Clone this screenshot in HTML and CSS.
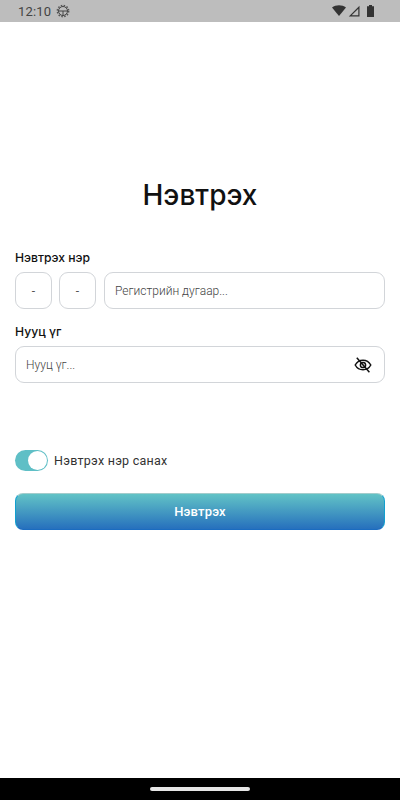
FILE: index.html
```html
<!DOCTYPE html>
<html lang="mn">
<head>
  <meta charset="UTF-8">
  <title>Нэвтрэх</title>
  <link rel="stylesheet" href="styles.css">
</head>
<body>
  <div class="status-bar">
    <div class="status-left">
      <span class="clock">12:10</span>
      <svg class="gear" width="14" height="14" viewBox="0 0 14 14">
        <circle cx="7" cy="7" r="5.600" fill="none" stroke="#555" stroke-width="1.600" stroke-dasharray="1.500 1.432"/>
        <circle cx="7" cy="7" r="4.500" fill="#bdbdbd" stroke="#444" stroke-width="1"/>
        <path d="M2.500 7h9M7 7v4.500" stroke="#444" stroke-width="1"/>
      </svg>
    </div>
    <div class="status-right">
      <svg width="14" height="12" viewBox="0 0 14 12"><path d="M0 2.600C3.800-.6 10.200-.6 14 2.600L7 11z" fill="#333"/></svg>
      <svg width="12" height="12" viewBox="0 0 12 12"><path d="M11.500.8V11.500H.8zM10.300 3.700L3.700 10.300h6.600z" fill="#333" fill-rule="evenodd"/></svg>
      <svg class="battery" width="7" height="12" viewBox="0 0 7 12"><path d="M2 0h3v1.200h2V12H0V1.200h2z" fill="#333"/></svg>
    </div>
  </div>

  <main class="login">
    <h1 class="title">Нэвтрэх</h1>

    <label class="field-label">Нэвтрэх нэр</label>
    <div class="reg-row">
      <div class="box box-small">-</div>
      <div class="box box-small">-</div>
      <div class="box box-grow placeholder">Регистрийн дугаар...</div>
    </div>

    <label class="field-label label-second">Нууц үг</label>
    <div class="box box-password">
      <span class="placeholder">Нууц үг...</span>
      <svg class="eye" width="18" height="18" viewBox="0 0 18 18" fill="none" stroke="#111" stroke-width="1.500">
        <path d="M1.200 9C3 5.800 5.800 4.200 9 4.200s6 1.600 7.800 4.800C15 12.200 12.200 13.800 9 13.800S3 12.200 1.200 9z"/>
        <circle cx="9" cy="9" r="2.600"/>
        <path d="M2.800 1.800l12.600 14.400"/>
      </svg>
    </div>

    <div class="remember">
      <div class="toggle"><div class="knob"></div></div>
      <span>Нэвтрэх нэр санах</span>
    </div>

    <button class="login-button">Нэвтрэх</button>
  </main>

  <div class="nav-bar"><div class="nav-handle"></div></div>
</body>
</html>
```

FILE: styles.css
```css
* {
  box-sizing: border-box;
}
html, body {
  height: 100%;
}
body {
  margin: 0;
  display: flex;
  flex-direction: column;
  height: 800px;
  font-family: Roboto, "Noto Sans", sans-serif;
  background-color: #fff;
  color: #111;
  overflow: hidden;
}
.status-bar {
  height: 22px;
  flex-shrink: 0;
  background-color: #bdbdbd;
  display: flex;
  justify-content: space-between;
  align-items: center;
  padding: 0 26px 0 18px;
}
.status-left {
  display: flex;
  align-items: center;
  gap: 5px;
}
.clock {
  font-size: 13px;
  letter-spacing: 0.2px;
  color: #444;
}
.status-right {
  display: flex;
  align-items: center;
  gap: 2px;
}
.battery {
  margin-left: 5px;
}
.login {
  flex: 1;
  padding: 0 15px;
  display: flex;
  flex-direction: column;
}
.title {
  margin: 155px 0 0;
  height: 36px;
  line-height: 36px;
  font-family: Inter, sans-serif;
  font-size: 28px;
  font-weight: 500;
  text-align: center;
}
.field-label {
  display: block;
  font-family: Inter, sans-serif;
  font-size: 12.200px;
  font-weight: 500;
  line-height: 16px;
  margin-top: 37px;
  margin-bottom: 6px;
}
.label-second {
  margin-top: 15px;
}
.reg-row {
  display: flex;
  gap: 7px;
}
.box {
  height: 37px;
  border: 1px solid #d2d5d9;
  border-radius: 9px;
  font-size: 12px;
  display: flex;
  align-items: center;
  background-color: #fff;
}
.box-small {
  width: 37px;
  justify-content: center;
  color: #555;
}
.box-grow {
  flex: 1;
  margin-left: 1px;
  padding-left: 10px;
}
.box-password {
  justify-content: space-between;
  padding: 0 12px 0 10px;
}
.placeholder {
  color: #444;
  font-weight: 300;
}
.remember {
  margin-top: 67px;
  display: flex;
  align-items: center;
  gap: 6px;
  font-size: 12.500px;
  letter-spacing: 0.25px;
  color: #333;
}
.toggle {
  width: 33px;
  height: 21px;
  border-radius: 11px;
  background-color: #5fbfc6;
  position: relative;
}
.knob {
  position: absolute;
  top: 1px;
  right: 1px;
  width: 19px;
  height: 19px;
  border-radius: 50%;
  background-color: #fff;
}
.login-button {
  margin-top: 22px;
  height: 37px;
  border: 1px solid;
  border-color: #a3cccc #12a0cf #1b6cc0;
  border-radius: 8px;
  background: linear-gradient(#62c3c6, #2670bd);
  color: #fff;
  font-family: inherit;
  font-size: 13px;
  font-weight: 500;
  letter-spacing: 0.15px;
}
.nav-bar {
  height: 22px;
  flex-shrink: 0;
  background-color: #000;
  display: flex;
  justify-content: center;
  align-items: center;
}
.nav-handle {
  width: 100px;
  height: 4px;
  border-radius: 2px;
  background-color: #e6e6e6;
}
```
